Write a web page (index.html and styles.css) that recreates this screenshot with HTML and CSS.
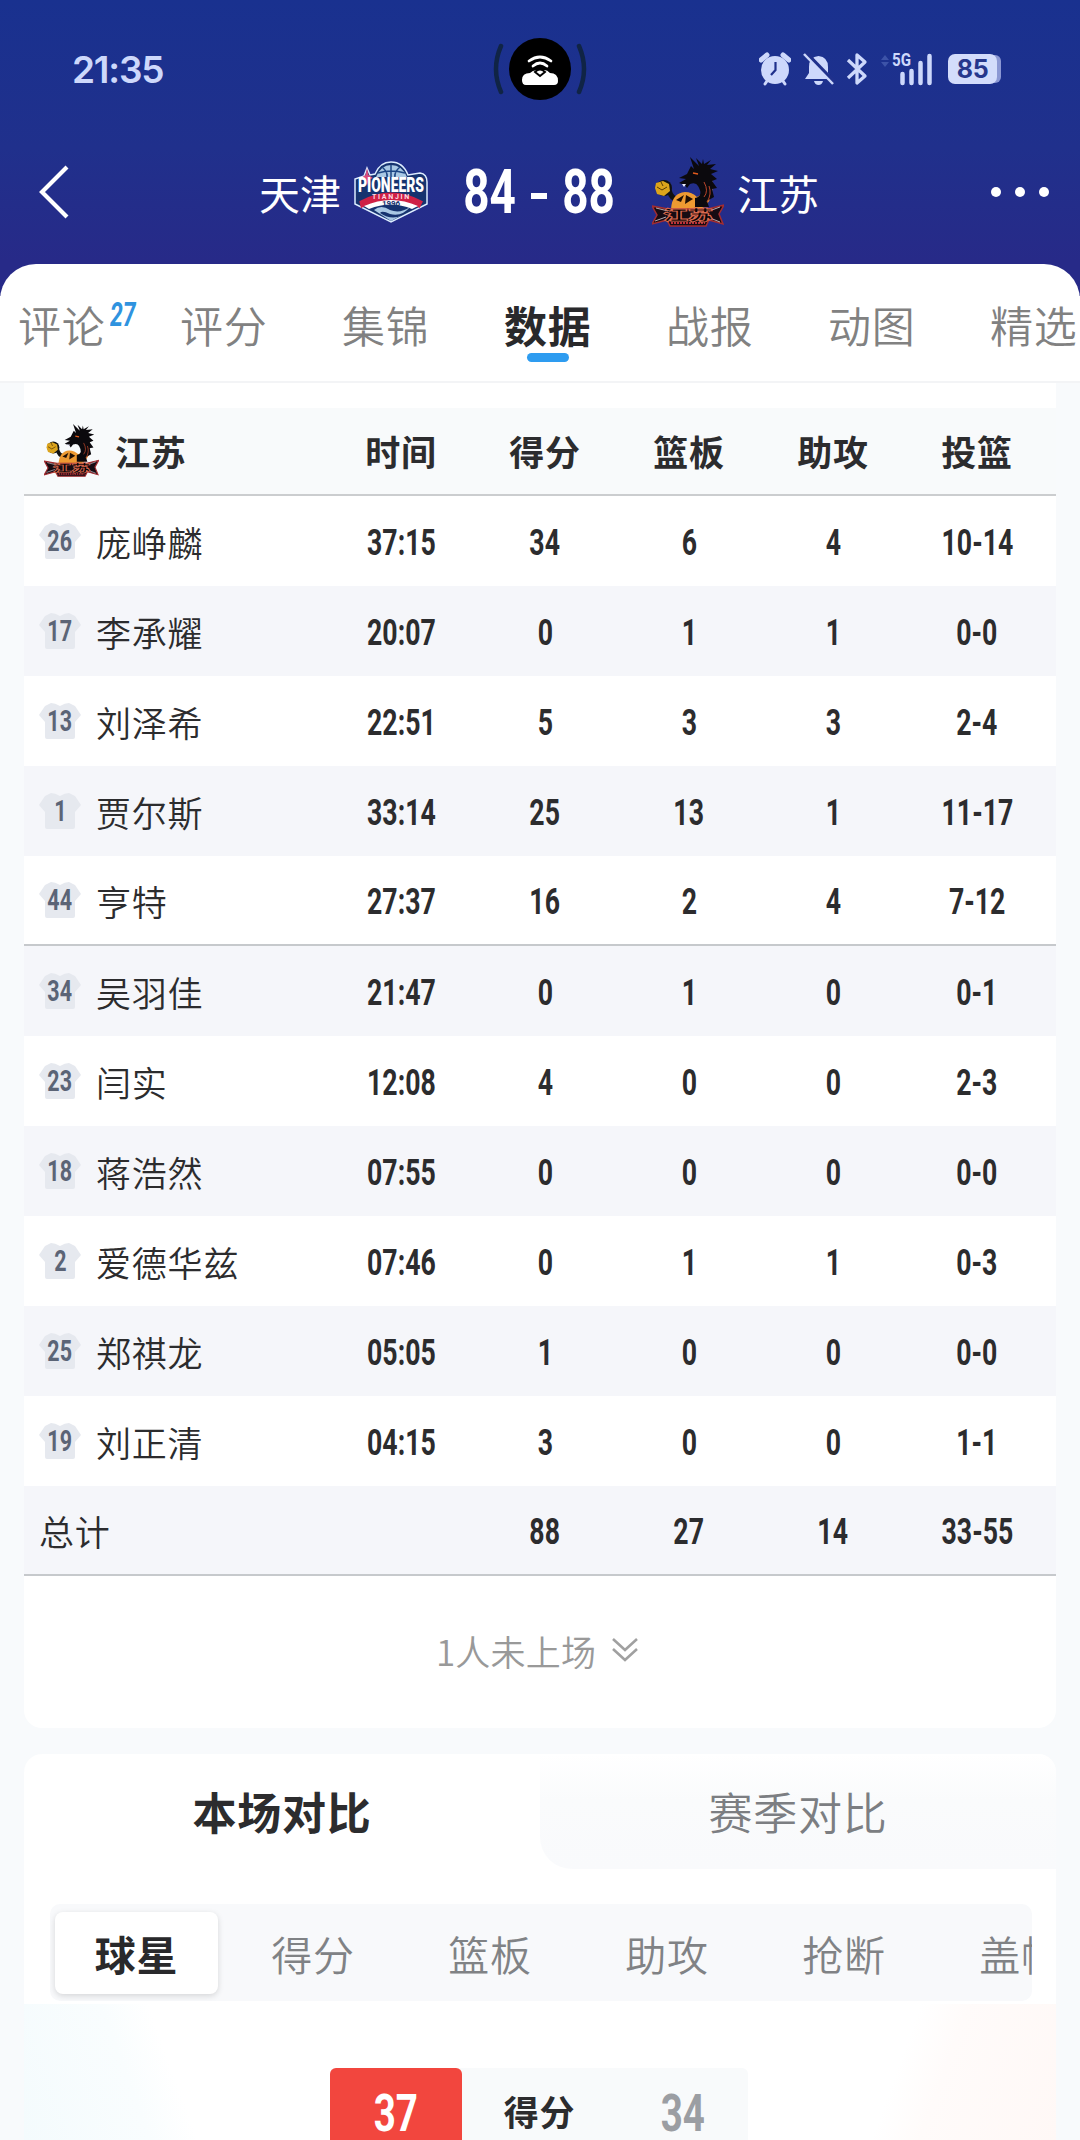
FILE: index.html
```html
<!DOCTYPE html>
<html lang="zh-CN">
<head>
  <meta charset="UTF-8">
  <title>天津 84 - 88 江苏</title>
  <link rel="stylesheet" href="styles.css">
</head>
<body>
  <svg class="defs" width="0" height="0">
    <symbol id="dragon" viewBox="0 0 72 70">
      <circle cx="12" cy="31" r="8" fill="#111"/>
      <path d="M17 33 Q20 44 28 42" fill="none" stroke="#111" stroke-width="5"/>
      <path d="M4 26 l7 -2 6 3 1 7 -6 5 -7 -2 -2 -6z" fill="#dca41c"/>
      <path d="M5 30 l5 3 5 -3 M9 25 l2 4" fill="none" stroke="#5a3c06" stroke-width="1"/>
      <path d="M19 52 Q20 36 33 35 Q40 35 45 40 Q53 37 49 28 L60 22 Q63 44 49 52z" fill="#ee9a32"/>
      <path d="M24 43 l8 -5 -3 7z M34 38 l7 4 -8 5z" fill="#211005"/>
      <path d="M43 41 Q52 39 46 29 Q44 25 38 27 L35 31 L33 28 L27 26 L34 22 L27 21 L35 17 L39 9 L42 12 L38 0 L47 9 L44 1 L50 7 L51 2 L52 7 L59 3 L55 8 L64 7 L58 12 L66 14 L59 17 L65 22 L60 24 L65 31 L60 32 L62 40 L55 44 L57 50 L43 50z" fill="#0b090d"/>
      <path d="M41 16 l5 1" stroke="#e35b1d" stroke-width="1.5"/>
      <path d="M52 25 q5 9 0 15 M57 29 q3 8 -2 16" fill="none" stroke="#b8452a"/>
      <path d="M30 27 l2 3 2 -3" fill="#eef"/>
      <path d="M0 49 L16 52 L56 52 L72 48 L67 57 L71 67 L57 63 L54 69 L18 69 L15 63 L0 67 L5 58z" fill="#170b12" stroke="#a32d31" stroke-width="1.5"/>
      <path d="M4 51 l12 3 M3 64 l11 -4 M57 54 l11 -4 M58 61 l10 4" stroke="#ddd4dc" stroke-width=".8"/>
      <path d="M19 66 h34" stroke="#bb3137" stroke-width="2" stroke-dasharray="2 1"/>
      <text x="11" y="63" class="dragon-text" textLength="50" lengthAdjust="spacingAndGlyphs">江苏</text>
    </symbol>
    <symbol id="jersey" viewBox="0 0 42 38">
      <path d="M12 1 Q16 1 21 4 Q26 1 30 1 L36 4 L42 13 L36 20 V35 Q36 37 34 37 H8 Q6 37 6 35 V20 L0 13 L6 4z"/>
    </symbol>
  </svg>

  <header class="header">
    <div class="status">
      <div class="clock">21:35</div>
      <div class="island">
        <svg width="96" height="64" viewBox="0 0 96 64">
          <path d="M9 9 Q-1 32 9 55 M87 9 Q97 32 87 55" fill="none" stroke="#102445" stroke-width="4.500" stroke-linecap="round"/>
          <circle cx="48" cy="32" r="31" fill="#000"/>
          <path d="M37 24 Q48 16 59 24 M41 29 Q48 23 55 29" fill="none" stroke="#fff" stroke-width="2.7" stroke-linecap="round"/>
          <path d="M34 48 Q30 48 30 43 Q30 36 38 36 Q42 32 48 34 Q54 31 58 36 Q66 36 66 44 Q66 48 62 48z" fill="#fff"/>
          <path d="M43 35 Q48 30 53 35 L48 39z" fill="#fff" stroke="#000" stroke-width="2"/>
        </svg>
      </div>
      <div class="icons">
        <svg width="32" height="34" viewBox="0 0 32 34">
          <circle cx="16" cy="18" r="14" fill="currentColor"/>
          <path d="M2 8 L8 3 M30 8 L24 3" stroke="currentColor" stroke-width="5" stroke-linecap="round"/>
          <path d="M8 29 l-2 3 M24 29 l2 3" stroke="currentColor" stroke-width="3" stroke-linecap="round"/>
          <path d="M16.500 10 V18 L12 23" fill="none" stroke="#20318c" stroke-width="2.200"/>
        </svg>
        <svg width="31" height="34" viewBox="0 0 31 34">
          <path d="M2 27 L6 21 V15 Q6 5 15.500 4 Q25 5 25 15 V21 L29 27z M11 29 H20 Q19 33 15.500 33 Q12 33 11 29z" fill="currentColor"/>
          <path d="M3 1 L31 30" stroke="#20318c" stroke-width="4"/>
          <path d="M1 2 L30 32" stroke="currentColor" stroke-width="2.500"/>
        </svg>
        <svg width="22" height="34" viewBox="0 0 22 34">
          <path d="M2 8 L19 24 L11 31 V3 L19 10 L2 26" fill="none" stroke="currentColor" stroke-width="3.300" stroke-linejoin="round"/>
        </svg>
        <svg class="signal" width="54" height="34" viewBox="0 0 54 34">
          <path d="M1 8 L5 3 L9 8z M1 10 L5 15 L9 10z" fill="#3d53a8"/>
          <text x="12" y="14" class="net" textLength="19" lengthAdjust="spacingAndGlyphs">5G</text>
          <path d="M22.500 22 V31 M31.500 19 V31 M40.500 11 V31 M49.500 4 V31" stroke="currentColor" stroke-width="4.500" stroke-linecap="round"/>
        </svg>
        <div class="battery">85</div>
      </div>
    </div>

    <div class="nav">
      <svg class="back" width="32" height="56" viewBox="0 0 32 56">
        <path d="M29 3 L4 28 L29 53" fill="none" stroke="#fff" stroke-width="4.200"/>
      </svg>
      <div class="match">
        <span class="team">天津</span>
        <svg class="logo-tj" width="74" height="62" viewBox="0 0 74 62">
          <path d="M21 13 Q26 1 37 1 Q49 1 54 14 L66 12 Q73 13 73 21 L73 43 L37 61 L1 43 V18 L10 15 L13 7 L16 14z" fill="#16336f" stroke="#dcecff" stroke-width="1.500"/>
          <path d="M22 16 Q27 4 37 4 Q48 4 53 16z" fill="#a9c8e4"/>
          <path d="M37 4 V16 M28 6 Q34 11 33 16 M46 6 Q40 11 41 16 M24 12 Q37 8 51 12" fill="none" stroke="#1c4584" stroke-width="1.500"/>
          <path d="M7 41 Q37 25 67 41 L65 45 Q37 31 8 45z" fill="#cf2145" stroke="#cf2145" stroke-width="3"/>
          <path d="M10 45 Q37 33 64 45 L58 48 Q37 39 15 48z" fill="#fff"/>
          <path d="M13 7 L14.500 14 L19 17 L14.500 19 L13 25 L11 19 L7 17 L11.500 14z" fill="#d94b7d"/>
          <path d="M20 49 Q27 43 36 49 Q46 53 56 46 Q48 56 36 53 Q28 49 26 52 Q38 60 48 54 L37 60z" fill="#a9c8e4"/>
          <text x="4" y="31" class="tj-name" textLength="66" lengthAdjust="spacingAndGlyphs">PIONEERS</text>
          <text x="18" y="38" class="tj-city" textLength="38">TIANJIN</text>
          <text x="28" y="45" class="tj-year" textLength="18">1996</text>
        </svg>
        <div class="score"><span class="num">84</span><i></i><span class="num">88</span></div>
        <svg class="logo-js" width="72" height="70"><use href="#dragon"/></svg>
        <span class="team">江苏</span>
      </div>
      <div class="more"><i></i><i></i><i></i></div>
    </div>
  </header>

  <nav class="tabs">
    <a>评论<sup class="num">27</sup></a>
    <a>评分</a>
    <a>集锦</a>
    <a class="active">数据</a>
    <a>战报</a>
    <a>动图</a>
    <a>精选</a>
  </nav>

  <main>
    <section class="card stats">
      <div class="row head">
        <div class="player"><svg width="55" height="53"><use href="#dragon"/></svg>江苏</div>
        <div>时间</div><div>得分</div><div>篮板</div><div>助攻</div><div>投篮</div>
      </div>
      <div id="rows"></div>
      <div class="bench">1人未上场
        <svg width="28" height="26" viewBox="0 0 28 26"><path d="M2 2 L14 13 L26 2 M2 12 L14 23 L26 12" fill="none" stroke="#a0a0a0" stroke-width="2.600"/></svg>
      </div>
    </section>

    <section class="card compare">
      <div class="switch">
        <div class="on">本场对比</div>
        <div class="off">赛季对比</div>
      </div>
      <div class="filter">
        <span class="on">球星</span>
        <span>得分</span>
        <span>篮板</span>
        <span>助攻</span>
        <span>抢断</span>
        <span>盖帽</span>
      </div>
      <div class="versus">
        <div class="vs-row">
          <div class="win"><span class="num">37</span></div>
          <div class="label">得分</div>
          <div class="lose"><span class="num">34</span></div>
        </div>
      </div>
    </section>
  </main>

  <script>
    const players = [
      [26, "庞峥麟", "37:15", 34, 6, 4, "10-14"],
      [17, "李承耀", "20:07", 0, 1, 1, "0-0"],
      [13, "刘泽希", "22:51", 5, 3, 3, "2-4"],
      [1, "贾尔斯", "33:14", 25, 13, 1, "11-17"],
      [44, "亨特", "27:37", 16, 2, 4, "7-12"],
      [34, "吴羽佳", "21:47", 0, 1, 0, "0-1"],
      [23, "闫实", "12:08", 4, 0, 0, "2-3"],
      [18, "蒋浩然", "07:55", 0, 0, 0, "0-0"],
      [2, "爱德华兹", "07:46", 0, 1, 1, "0-3"],
      [25, "郑祺龙", "05:05", 1, 0, 0, "0-0"],
      [19, "刘正清", "04:15", 3, 0, 0, "1-1"],
      [null, "总计", "", 88, 27, 14, "33-55"]
    ];

    function renderRows() {
      const list = document.getElementById("rows");
      players.forEach(([no, name, ...cells], i) => {
        const row = document.createElement("div");
        // line under the starting five and under the total
        row.className = "row" + (i === 4 || i === 11 ? " line" : "");
        const shirt = no === null ? "" :
          `<span class="shirt"><svg width="42" height="38"><use href="#jersey"/></svg><b class="num">${no}</b></span>`;
        row.innerHTML = `<div class="player">${shirt}${name}</div>` +
          cells.map(c => `<div class="cell"><span class="num">${c}</span></div>`).join("");
        list.appendChild(row);
      });
    }

    renderRows();
  </script>
</body>
</html>
```
FILE: styles.css
```css
* {
  box-sizing: border-box;
}

body {
  margin: 0;
  width: 1080px;
  height: 2140px;
  overflow: hidden;
  background: #f8fafc;
  color: #2c2c2e;
  font-family: "Noto Sans CJK SC", "Noto Sans", sans-serif;
  letter-spacing: 0.8px;
}

.defs {
  position: absolute;
}

/* narrow digits */
.num {
  display: inline-block;
  font-family: Roboto, sans-serif;
  font-weight: 700;
  letter-spacing: 0;
  transform: scaleX(0.74);
}

.header {
  height: 296px;
  background: linear-gradient(#19318f, #20308c 50%, #272a88 88%);
  color: #fff;
}

.status {
  display: grid;
  grid-template-columns: 1fr 96px 1fr;
  align-items: center;
  height: 140px;
  padding: 0 83px 2px 72px;
  color: #cdd8fb;
}

.clock {
  font: 600 37px Inter, sans-serif;
  letter-spacing: -1.2px;
}

.island {
  height: 64px;
  margin-left: 5px;
}

.icons {
  display: flex;
  align-items: center;
  justify-content: flex-end;
  gap: 12px;
}

.net {
  font: 700 19px Roboto, sans-serif;
  letter-spacing: 0;
  fill: currentColor;
}

.battery {
  width: 49px;
  height: 30px;
  margin-left: 2px;
  border-radius: 7px;
  background: #d3dcfb;
  color: #26378c;
  font: 700 25px/30px Inter, sans-serif;
  letter-spacing: -0.5px;
  text-align: center;
  box-shadow: 5px 0 0 -1px #8c98d4;
}

.nav {
  display: flex;
  align-items: center;
  height: 104px;
  padding: 0 31px 0 38px;
}

.match {
  display: flex;
  align-items: center;
  margin-left: 189px;
}

.team {
  width: 84px;
  font-size: 41px;
  letter-spacing: 0;
  white-space: nowrap;
}

.logo-tj {
  margin-left: 11px;
}

.score {
  display: flex;
  align-items: center;
  justify-content: space-between;
  width: 170px;
  margin: 0 28px 0 26px;
  font-size: 62px;
  line-height: 70px;
}

.score i {
  width: 16px;
  height: 6px;
  margin: 7px -12px 0;
  background: #fff;
}

.logo-js {
  margin-right: 13px;
}

.more {
  display: flex;
  gap: 14px;
  margin-left: auto;
}

.more i {
  width: 10px;
  height: 10px;
  border-radius: 50%;
  background: #fff;
}

.tj-name {
  font: 900 20px Roboto, sans-serif;
  letter-spacing: 0;
  fill: #fff;
}

.tj-city {
  font: 700 7px Roboto, sans-serif;
  fill: #ffd9e0;
}

.tj-year {
  font: 700 8px Roboto, sans-serif;
  letter-spacing: 0;
  fill: #16336f;
}

.dragon-text {
  font: 900 14px "Noto Sans CJK SC", sans-serif;
  letter-spacing: 0;
  fill: #080508;
  stroke: #d9694f;
  stroke-width: 0.8px;
}

.tabs {
  display: grid;
  grid-template-columns: repeat(7, 162px);
  height: 119px;
  margin-top: -32px;
  padding-left: 18px;
  border-bottom: 2px solid #f3f4f6;
  border-radius: 36px 36px 0 0;
  background: #fff;
  overflow: hidden;
}

.tabs a {
  position: relative;
  color: #818181;
  font-size: 43px;
  font-weight: 350;
  line-height: 120px;
  white-space: nowrap;
}

.tabs .active {
  color: #29292b;
  font-weight: 700;
}

.tabs .active::after {
  content: "";
  position: absolute;
  left: 23px;
  top: 89px;
  width: 42px;
  height: 9px;
  border-radius: 5px;
  background: #2e9cf0;
}

.tabs sup {
  position: absolute;
  left: 92px;
  top: 33px;
  color: #2f93df;
  font-size: 33px;
  font-style: italic;
  line-height: 36px;
  transform: scaleX(0.7);
  transform-origin: left;
}

.card {
  margin: 0 24px;
  background: #fff;
}

.stats {
  height: 1345px;
  padding-top: 25px;
  border-radius: 0 0 18px 18px;
}

.row {
  display: grid;
  grid-template-columns: 305px repeat(5, 144px);
  align-items: center;
  height: 90px;
  padding-right: 7px;
  text-align: center;
  font-size: 36px;
}

.row:nth-child(even) {
  background: #f5f6fa;
}

.cell {
  padding-bottom: 5px;
}

.head {
  height: 88px;
  padding-bottom: 2px;
  border-bottom: 2px solid #cbcdcf;
  font-size: 35px;
  font-weight: 700;
}

.stats .head {
  background: #f8fafb;
}

.line {
  border-bottom: 2px solid #c6c9cc;
}

.player {
  display: flex;
  align-items: center;
  padding-left: 15px;
  font-size: 35px;
  white-space: nowrap;
}

#rows .player {
  font-weight: 350;
}

.head .player {
  padding-left: 20px;
  gap: 16px;
}

.shirt {
  display: grid;
  place-items: center;
  width: 42px;
  margin-right: 15px;
  fill: #e6e9ef;
}

.shirt > * {
  grid-area: 1 / 1;
}

.shirt .num {
  color: #5b6476;
  font-size: 29px;
  line-height: 38px;
}

.bench {
  display: flex;
  align-items: center;
  justify-content: center;
  gap: 15px;
  height: 148px;
  padding-right: 5px;
  color: #999;
  font-size: 35px;
  font-weight: 350;
  letter-spacing: 0.2px;
}

.compare {
  height: 390px;
  margin-top: 26px;
  border-radius: 18px 18px 0 0;
  background:
    linear-gradient(70deg, #f4fbfd 0, #f9fdfe 120px, #fff 165px) 0 250px / 300px 140px no-repeat,
    linear-gradient(-70deg, #fff8f6 0, #fffbfa 130px, #fff 175px) 100% 250px / 300px 140px no-repeat,
    #fff;
}

.switch {
  display: grid;
  grid-template-columns: 1fr 1fr;
  height: 115px;
  font-size: 44px;
  line-height: 114px;
  text-align: center;
}

.switch .on {
  font-weight: 700;
}

.switch .off {
  border-radius: 0 18px 0 32px;
  background: linear-gradient(#fff, #fafbfc 40%, #f9fafc);
  color: #7c7e82;
  font-weight: 350;
}

.filter {
  display: grid;
  grid-template-columns: 163px repeat(5, 177px);
  column-gap: 0;
  height: 97px;
  margin: 35px 24px 0 26px;
  padding: 8px 0 7px 5px;
  border-radius: 10px;
  background: #f8f9fb;
  color: #808285;
  font-size: 41px;
  font-weight: 350;
  line-height: 82px;
  text-align: center;
  overflow: hidden;
}

.filter span + span {
  padding-left: 13px;
}

.filter .on {
  border-radius: 8px;
  background: #fff;
  box-shadow: 0 2px 6px rgba(0, 0, 0, 0.14);
  color: #29292b;
  font-weight: 700;
}

.versus {
  display: flex;
  justify-content: center;
  padding: 67px 2px 0 0;
}

.vs-row {
  display: grid;
  grid-template-columns: 132px 155px 131px;
  height: 90px;
  border-radius: 6px;
  background: #f8fafb;
  text-align: center;
  line-height: 81px;
}

.win {
  border-radius: 6px 6px 0 0;
  background: #f2463e;
  color: #fff;
  font-size: 52px;
}

.label {
  font-size: 35px;
  font-weight: 700;
  line-height: 86px;
}

.lose {
  color: #9b9ea3;
  font-size: 52px;
}
```
